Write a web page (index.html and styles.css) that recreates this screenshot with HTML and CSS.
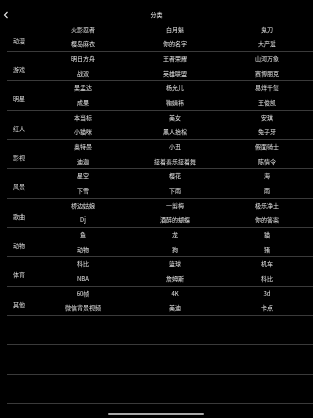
FILE: index.html
```html
<!DOCTYPE html>
<html lang="zh">
<head>
<meta charset="utf-8">
<title>分类</title>
<link rel="stylesheet" href="styles.css">
</head>
<body>
<div class="screen">
  <header class="nav">
    <svg class="back" width="6" height="8" viewBox="0 0 6 8"><polyline points="4.5,1 1.5,4 4.5,7" fill="none" stroke="#e8e8e8" stroke-width="1.1"/></svg>
    <div class="title">分类</div>
  </header>
  <div class="list">
    <div class="row"><div class="label">动漫</div><div class="cell"><span>火影忍者</span><span>樱岛麻衣</span></div><div class="cell"><span>白月魁</span><span>你的名字</span></div><div class="cell"><span>鬼刀</span><span>大产爱</span></div></div>
    <div class="row"><div class="label">游戏</div><div class="cell"><span>明日方舟</span><span>战双</span></div><div class="cell"><span>王者荣耀</span><span>英雄联盟</span></div><div class="cell"><span>山河万象</span><span>赛博朋克</span></div></div>
    <div class="row"><div class="label">明星</div><div class="cell"><span>吴孟达</span><span>成果</span></div><div class="cell"><span>杨允儿</span><span>鞠婧祎</span></div><div class="cell"><span>易烊千玺</span><span>王俊凯</span></div></div>
    <div class="row"><div class="label">红人</div><div class="cell"><span>本当标</span><span>小猫咪</span></div><div class="cell"><span>美女</span><span>黑人抬棺</span></div><div class="cell"><span>安琪</span><span>兔子牙</span></div></div>
    <div class="row"><div class="label">影视</div><div class="cell"><span>奥特曼</span><span>迪迦</span></div><div class="cell"><span>小丑</span><span>接着奏乐接着舞</span></div><div class="cell"><span>假面骑士</span><span>陈情令</span></div></div>
    <div class="row"><div class="label">风景</div><div class="cell"><span>星空</span><span>下雪</span></div><div class="cell"><span>樱花</span><span>下雨</span></div><div class="cell"><span>海</span><span>雨</span></div></div>
    <div class="row"><div class="label">歌曲</div><div class="cell"><span>桥边姑娘</span><span>Dj</span></div><div class="cell"><span>一剪梅</span><span>酒醉的蝴蝶</span></div><div class="cell"><span>极乐净土</span><span>你的答案</span></div></div>
    <div class="row"><div class="label">动物</div><div class="cell"><span>鱼</span><span>动物</span></div><div class="cell"><span>龙</span><span>狗</span></div><div class="cell"><span>猫</span><span>猪</span></div></div>
    <div class="row"><div class="label">体育</div><div class="cell"><span>科比</span><span>NBA</span></div><div class="cell"><span>篮球</span><span>詹姆斯</span></div><div class="cell"><span>机车</span><span>科比</span></div></div>
    <div class="row"><div class="label">其他</div><div class="cell"><span>60帧</span><span>微信背景视频</span></div><div class="cell"><span>4K</span><span>美迪</span></div><div class="cell"><span>3d</span><span>卡点</span></div></div>
    <div class="row empty"></div>
    <div class="row empty"></div>
    <div class="row empty"></div>
  </div>
  <div class="home-bar"></div>
</div>
</body>
</html>
```
FILE: styles.css
```css
* { box-sizing: border-box; }
html, body { margin: 0; padding: 0; background: #000; }
body {
  font-family: "Noto Sans CJK SC", "Noto Sans", sans-serif;
  color: #e4e4e4;
  font-size: 6px;
  -webkit-font-smoothing: antialiased;
}
.screen {
  width: 313px;
  height: 418px;
  position: relative;
  overflow: hidden;
  display: flex;
  flex-direction: column;
  filter: grayscale(1);
}
.nav {
  height: 22.67px;
  flex: none;
  display: flex;
  align-items: center;
  justify-content: center;
  position: relative;
}
.back {
  position: absolute;
  left: 3px;
  top: 11px;
}
.title {
  color: #f2f2f2;
  font-size: 6px;
  line-height: 8px;
  margin-top: 7px;
}
.list { display: flex; flex-direction: column; }
.row {
  height: 29.33px;
  margin-left: 7px;
  border-bottom: 1px solid #3a3a3a;
  display: grid;
  grid-template-columns: 30px 92px 92px 92px;
}
.label {
  padding-left: 6px;
  padding-top: 14px;
  line-height: 8px;
  color: #dedede;
}
.cell {
  display: flex;
  flex-direction: column;
  align-items: center;
}
.cell span {
  height: 14.67px;
  line-height: 14.67px;
  white-space: nowrap;
}
.home-bar {
  position: absolute;
  left: 108px;
  top: 413px;
  width: 96px;
  height: 2px;
  border-radius: 1px;
  background: #a8a8a8;
}
```
